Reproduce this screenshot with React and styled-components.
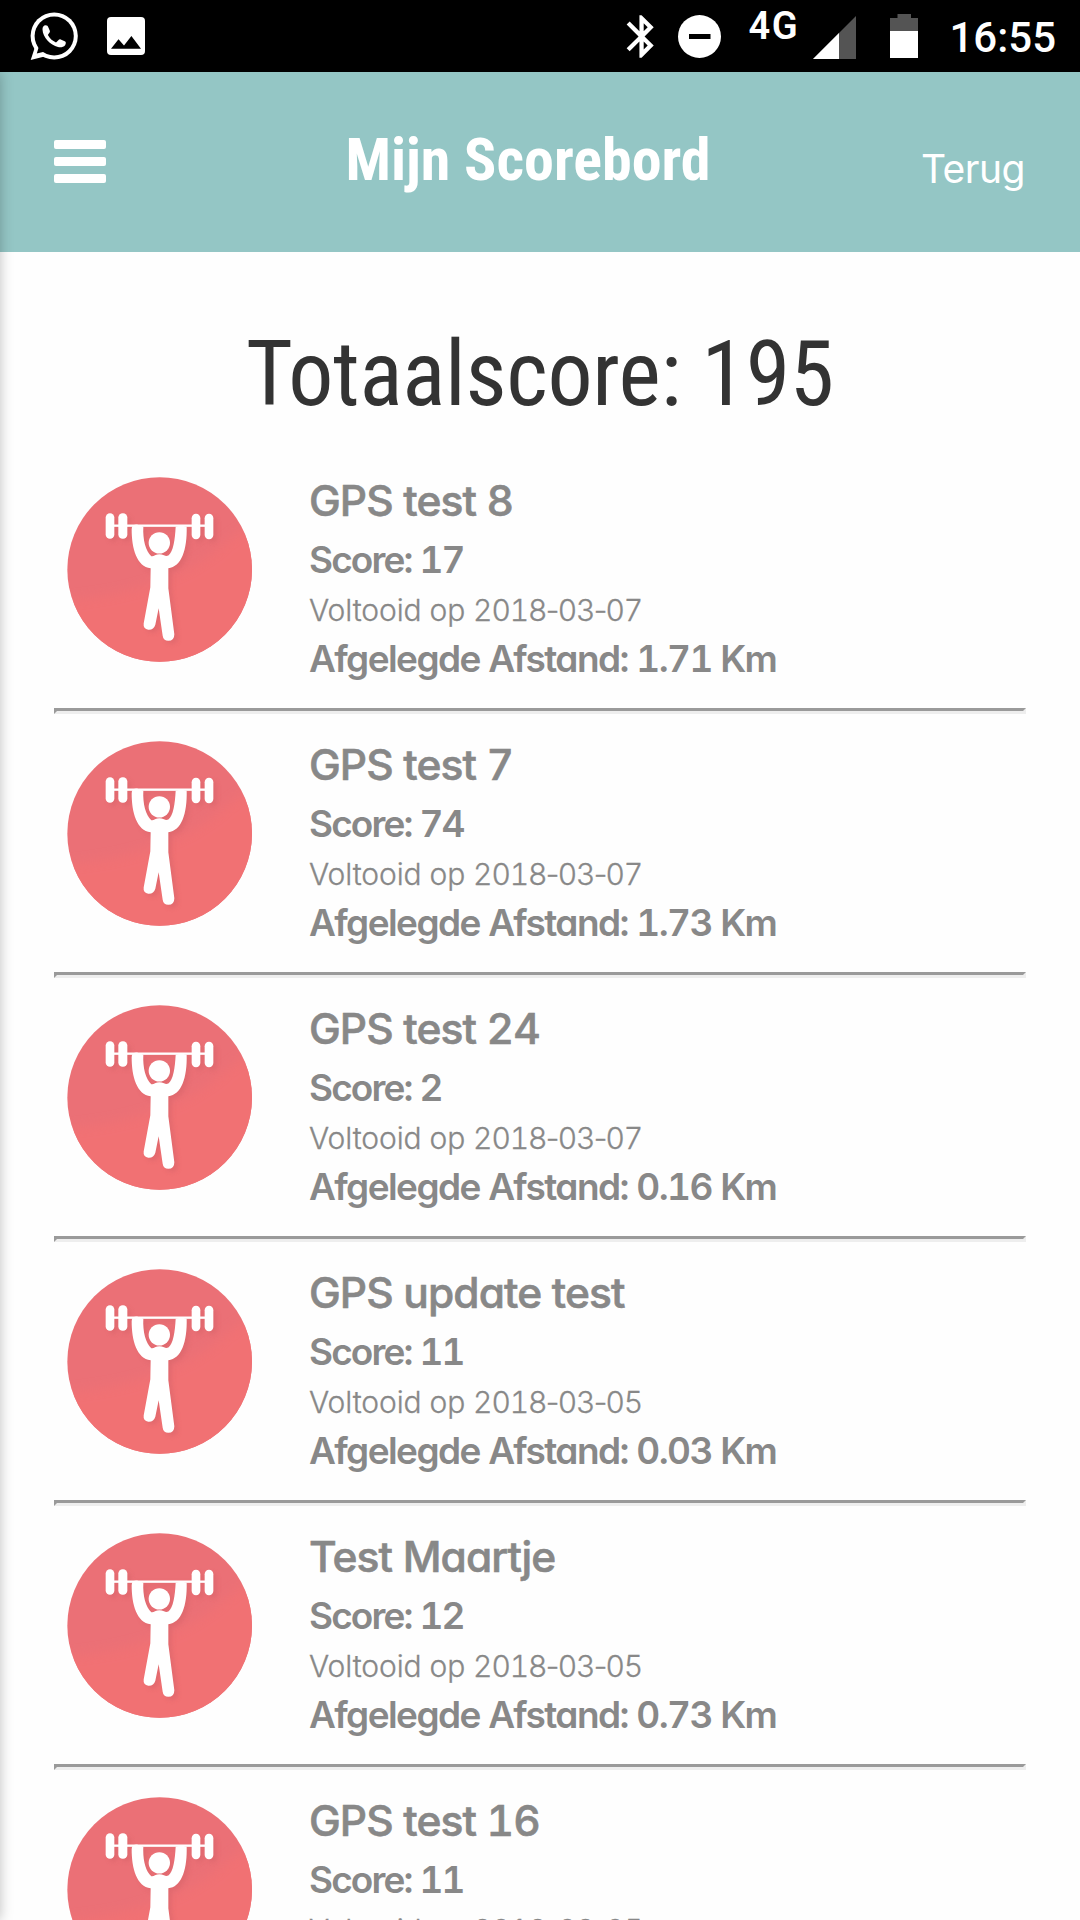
import React from 'react'
import styled, { createGlobalStyle } from 'styled-components'

const GlobalStyle = createGlobalStyle`
  * {
    box-sizing: border-box;
    margin: 0;
    padding: 0;
  }
  body {
    background-color: #fefefe;
  }
`
const Screen = styled.div`
  width: 1080px;
  height: 1920px;
  overflow: hidden;
  background-color: #fefefe;
  font-family: Inter, "Open Sans", sans-serif;
`
const StatusBar = styled.div`
  height: 72px;
  background-color: black;
  color: white;
  display: flex;
  justify-content: space-between;
  font-family: Roboto, sans-serif;
  font-weight: 500;
  svg {
    display: block;
    flex-shrink: 0;
  }
`
const StatusGroup = styled.div`
  display: flex;
  align-items: flex-start;
  padding: ${props => props.$right ? '0 24px 0 0' : '0 0 0 30px'};
`
const StatusIcon = styled.svg`
  width: ${props => props.$w}px;
  height: 72px;
  margin-right: ${props => props.$gap}px;
`
const Network = styled.span`
  width: 52px;
  margin-right: 13px;
  font-size: 38px;
  font-weight: 600;
  line-height: 52px;
  letter-spacing: 1.5px;
`
const Clock = styled.span`
  font-size: 42px;
  line-height: 75px;
`
const Page = styled.div`
  position: relative;
  height: 1848px;
  overflow: hidden;
`
const DrawerShadow = styled.div`
  position: absolute;
  top: 0;
  left: -20px;
  width: 20px;
  height: 100%;
  box-shadow: 0 0 13px rgba(0, 0, 0, .25);
`
const Header = styled.header`
  height: 180px;
  padding: 0 54px;
  background-color: #94c6c5;
  color: white;
  display: flex;
  justify-content: space-between;
`
const Hamburger = styled.div`
  width: 82px;
  padding-top: 68px;
  display: flex;
  flex-direction: column;
  gap: 8px;
`
const HamburgerLine = styled.div`
  width: 52px;
  height: 9px;
  border-radius: 2px;
  background-color: white;
`
const HeaderTitle = styled.h1`
  font-family: "Roboto Condensed", Roboto, sans-serif;
  font-size: 60px;
  font-weight: 700;
  line-height: 176px;
`
const BackLink = styled.p`
  width: 106px;
  padding-right: 1px;
  text-align: right;
  font-size: 39px;
  font-weight: 400;
  line-height: 194px;
  letter-spacing: -0.5px;
`
const TotalScore = styled.h2`
  height: 198px;
  text-align: center;
  color: #333;
  font-family: "Roboto Condensed", Roboto, sans-serif;
  font-size: 90px;
  font-weight: 400;
  line-height: 246px;
  letter-spacing: -0.3px;
`
const ScoreList = styled.ul`
  padding: 0 54px;
  list-style: none;
`
const ScoreItem = styled.li`
  height: 264px;
  padding: 22px 0 0 13px;
  display: flex;
  gap: 57px;
`
const Divider = styled.hr`
  height: 6px;
  margin-top: -6px;
  border: 3px solid;
  border-color: #9a9a9a #eee #eee #9a9a9a;
`
const Badge = styled.svg`
  width: 185px;
  height: 185px;
  margin-top: 5px;
  flex-shrink: 0;
`
const ItemText = styled.div`
  color: #888;
  white-space: nowrap;
  font-feature-settings: "cv11", "tnum", "calt" 0;
`
const ItemTitle = styled.h3`
  font-size: 42.5px;
  font-weight: 500;
  line-height: 58px;
  letter-spacing: -0.9px;
  -webkit-text-stroke: 0.6px #888;
`
const ItemValue = styled.p`
  font-size: 37px;
  font-weight: 600;
  line-height: ${props => props.$line}px;
  letter-spacing: ${props => props.$tracking}px;
`
const ItemDate = styled.p`
  font-size: 30px;
  font-weight: 300;
  line-height: 40px;
  letter-spacing: -0.1px;
  -webkit-text-stroke: 0.3px #888;
`
const DateValue = styled.span`
  letter-spacing: -1.1px;
`
const Dash = styled.span`
  margin: 0 -0.6px;
  font-feature-settings: "calt" 0;
`

const scores = [
  { title: 'GPS test 8', score: 17, date: '2018-03-07', distance: '1.71' },
  { title: 'GPS test 7', score: 74, date: '2018-03-07', distance: '1.73' },
  { title: 'GPS test 24', score: 2, date: '2018-03-07', distance: '0.16' },
  { title: 'GPS update test', score: 11, date: '2018-03-05', distance: '0.03' },
  { title: 'Test Maartje', score: 12, date: '2018-03-05', distance: '0.73' },
  { title: 'GPS test 16', score: 11, date: '2018-03-05', distance: '0.05' },
]

function Figure() {
  return (
    <>
      <rect x="198" y="160" width="26" height="77" rx="13" />
      <rect x="236" y="160" width="27" height="77" rx="13" />
      <rect x="456" y="162" width="26" height="76" rx="13" />
      <rect x="495" y="162" width="26" height="76" rx="13" />
      <rect x="215" y="194" width="290" height="7" />
      <circle cx="359" cy="249" r="32" />
      <path d="M276 208 Q276 194 292 194 L311 201 C309 240 318 274 335 289 Q341 290 346 286 Q359 281 373 286 Q379 290 386 287 C401 276 406 240 408 201 L425 197 L441 201 C443 270 425 322 386 325 L386 385 L404 523 Q404 543 386 543 Q371 543 369 528 L357 445 L347 495 Q342 511 326 510 Q310 507 312 491 L332 382 L333 325 C291 320 276 265 276 208Z" />
    </>
  )
}

function WeightBadge() {
  return (
    <Badge viewBox="82 51.5 555 555">
      <defs>
        <clipPath id="disc"><circle cx="360" cy="329" r="277" /></clipPath>
        <filter id="soft"><feGaussianBlur stdDeviation="7" /></filter>
        <filter id="softer"><feGaussianBlur stdDeviation="16" /></filter>
      </defs>
      <circle cx="360" cy="329" r="277" fill="#eb7076" />
      <g clipPath="url(#disc)">
        <path d="M40 425 C270 410 450 350 560 245 L680 160 L680 660 L40 660Z" fill="#f17173" filter="url(#softer)" />
        <g transform="translate(10 9)" fill="#d9656b" opacity=".6" filter="url(#soft)"><Figure /></g>
      </g>
      <g fill="white"><Figure /></g>
    </Badge>
  )
}

function App() {
  return (
    <Screen>
      <GlobalStyle />
      <StatusBar>
        <StatusGroup>
          <StatusIcon $w={48} $gap={29} viewBox="30 0 48 72">
            <circle cx="54.2" cy="36" r="23.6" fill="white" />
            <path d="M32 42 L34.8 47.5 L30.7 60 L46.5 56 L52 48Z" fill="white" />
            <circle cx="54.2" cy="36" r="19.6" fill="black" />
            <path d="M37 44 L38.6 47.5 L36.8 53.6 L44 51.8 L50 50Z" fill="black" />
            <path d="M42.5 29.5 C42.3 27 43.8 25.2 45.6 25.2 C47.3 25.2 47.8 26 48.4 27.5 L49.9 31 C50.3 32.4 48.4 33.8 47.9 35 C49.5 38.3 52.5 41 56 42.4 C57.6 41.4 58.6 39.3 60.2 39.3 L65.2 41.6 C66.3 42.4 65.8 44.2 65.1 45.2 C63.6 47.1 60.6 47.6 58 47 C50.3 45.2 42.8 37.3 42.5 29.5Z" fill="white" />
          </StatusIcon>
          <StatusIcon $w={38} $gap={0} viewBox="107 0 38 72">
            <rect x="107" y="17" width="38" height="38" rx="4" fill="white" />
            <path d="M111 48.8 L118.5 39.3 L124 45.6 L131.4 36 L141 48.8Z" fill="black" />
          </StatusIcon>
        </StatusGroup>
        <StatusGroup $right>
          <StatusIcon $w={28} $gap={24} viewBox="626 0 28 72">
            <path transform="translate(616 10.9) scale(2.13)" fill="white" d="M17.71 7.71L12 2h-1v7.59L6.41 5 5 6.41 10.59 12 5 17.59 6.41 19 11 14.41V22h1l5.71-5.71-4.3-4.29 4.3-4.29zM13 5.83l1.88 1.88L13 9.59V5.83zm1.88 10.46L13 18.17v-3.76l1.88 1.88z" />
          </StatusIcon>
          <StatusIcon $w={43} $gap={27} viewBox="678 0 43 72">
            <circle cx="699.5" cy="36.5" r="21.5" fill="white" />
            <rect x="689" y="34" width="21.5" height="5" fill="black" />
          </StatusIcon>
          <Network>4G</Network>
          <StatusIcon $w={43} $gap={34} viewBox="813 0 43 72">
            <path d="M813 59 L856 16 V59Z" fill="#545454" />
            <path d="M813 59 L839 33 V59Z" fill="white" />
          </StatusIcon>
          <StatusIcon $w={28} $gap={31} viewBox="890 0 28 72">
            <path d="M890 31 V18 H897.5 V14 H911 V18 H918 V31Z" fill="#545454" />
            <rect x="890" y="31" width="28" height="27" fill="white" />
          </StatusIcon>
          <Clock>16:55</Clock>
        </StatusGroup>
      </StatusBar>
      <Page>
        <Header>
          <Hamburger>
            <HamburgerLine />
            <HamburgerLine />
            <HamburgerLine />
          </Hamburger>
          <HeaderTitle>Mijn Scorebord</HeaderTitle>
          <BackLink>Terug</BackLink>
        </Header>
        <TotalScore>Totaalscore: 195</TotalScore>
        <ScoreList>
          {scores.map((item, i) => {
            const [year, month, day] = item.date.split('-')
            return (
              <React.Fragment key={i}>
                <ScoreItem>
                  <WeightBadge />
                  <ItemText>
                    <ItemTitle>{item.title}</ItemTitle>
                    <ItemValue $line={60} $tracking={-1.9}>Score: {item.score}</ItemValue>
                    <ItemDate>
                      Voltooid op <DateValue>{year}<Dash>-</Dash>{month}<Dash>-</Dash>{day}</DateValue>
                    </ItemDate>
                    <ItemValue $line={57} $tracking={-1.56}>Afgelegde Afstand: {item.distance} Km</ItemValue>
                  </ItemText>
                </ScoreItem>
                <Divider />
              </React.Fragment>
            )
          })}
        </ScoreList>
        <DrawerShadow />
      </Page>
    </Screen>
  )
}

export default App
